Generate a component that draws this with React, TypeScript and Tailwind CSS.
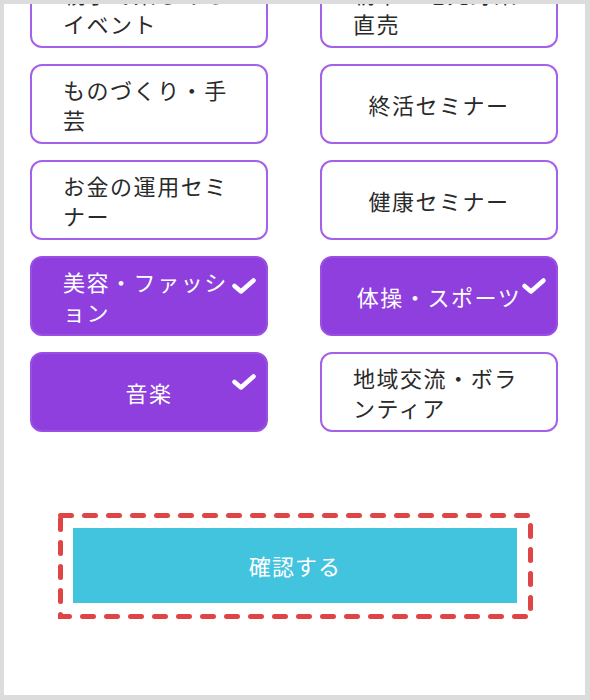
import React from "react";

type Item = { label: string; selected?: boolean };

const ITEMS: Item[] = [
  { label: "親子で楽しめるイベント" },
  { label: "朝市・地元野菜直売" },
  { label: "ものづくり・手芸" },
  { label: "終活セミナー" },
  { label: "お金の運用セミナー" },
  { label: "健康セミナー" },
  { label: "美容・ファッション", selected: true },
  { label: "体操・スポーツ", selected: true },
  { label: "音楽", selected: true },
  { label: "地域交流・ボランティア" },
];

function CheckMark() {
  return (
    <svg width="26" height="18" viewBox="0 0 26 18" className="absolute right-[9px] top-[19px]">
      <polyline
        points="3.5,9 10,14.5 22.5,3.5"
        fill="none"
        stroke="white"
        strokeWidth="4.5"
        strokeLinecap="round"
        strokeLinejoin="round"
      />
    </svg>
  );
}

function Card({ item }: { item: Item }) {
  return (
    <div
      className={`relative flex h-[80px] items-center justify-center rounded-[12px] border-2 px-[31px] ${
        item.selected ? "border-[#9a4fe3] bg-[#8e3fdd] text-white" : "border-[#a461ea] bg-white text-[#2a2a2a]"
      }`}
    >
      <p className="text-left text-[22px] leading-[30px] tracking-[0.07em]">{item.label}</p>
      {item.selected && <CheckMark />}
    </div>
  );
}

export default function App() {
  return (
    <div
      className="h-[700px] w-[590px] overflow-hidden border-t-4 border-r-[5px] border-b-[5px] border-l-4 border-[#dcdcdc] bg-white"
      style={{ fontFamily: '"Noto Sans CJK JP", "Noto Sans", sans-serif' }}
    >
      <div className="mt-[-36px] grid grid-cols-[238px_238px] gap-x-[52px] gap-y-[16px] pl-[26px]">
        {ITEMS.map((item) => (
          <Card key={item.label} item={item} />
        ))}
      </div>

      <div className="relative ml-[54px] mt-[81px] h-[106px] w-[475px] px-[15px] pt-[15px]">
        <svg className="absolute inset-0" width="475" height="106" viewBox="0 0 475 106">
          <rect
            x="2.5"
            y="2.5"
            width="470"
            height="101"
            fill="none"
            stroke="#df4545"
            strokeWidth="5"
            strokeDasharray="11 13"
            strokeLinecap="round"
          />
        </svg>
        <button className="flex h-[75px] w-[444px] items-center justify-center bg-[#42c3de] text-[22px] tracking-[0.05em] text-white">
          確認する
        </button>
      </div>
    </div>
  );
}
